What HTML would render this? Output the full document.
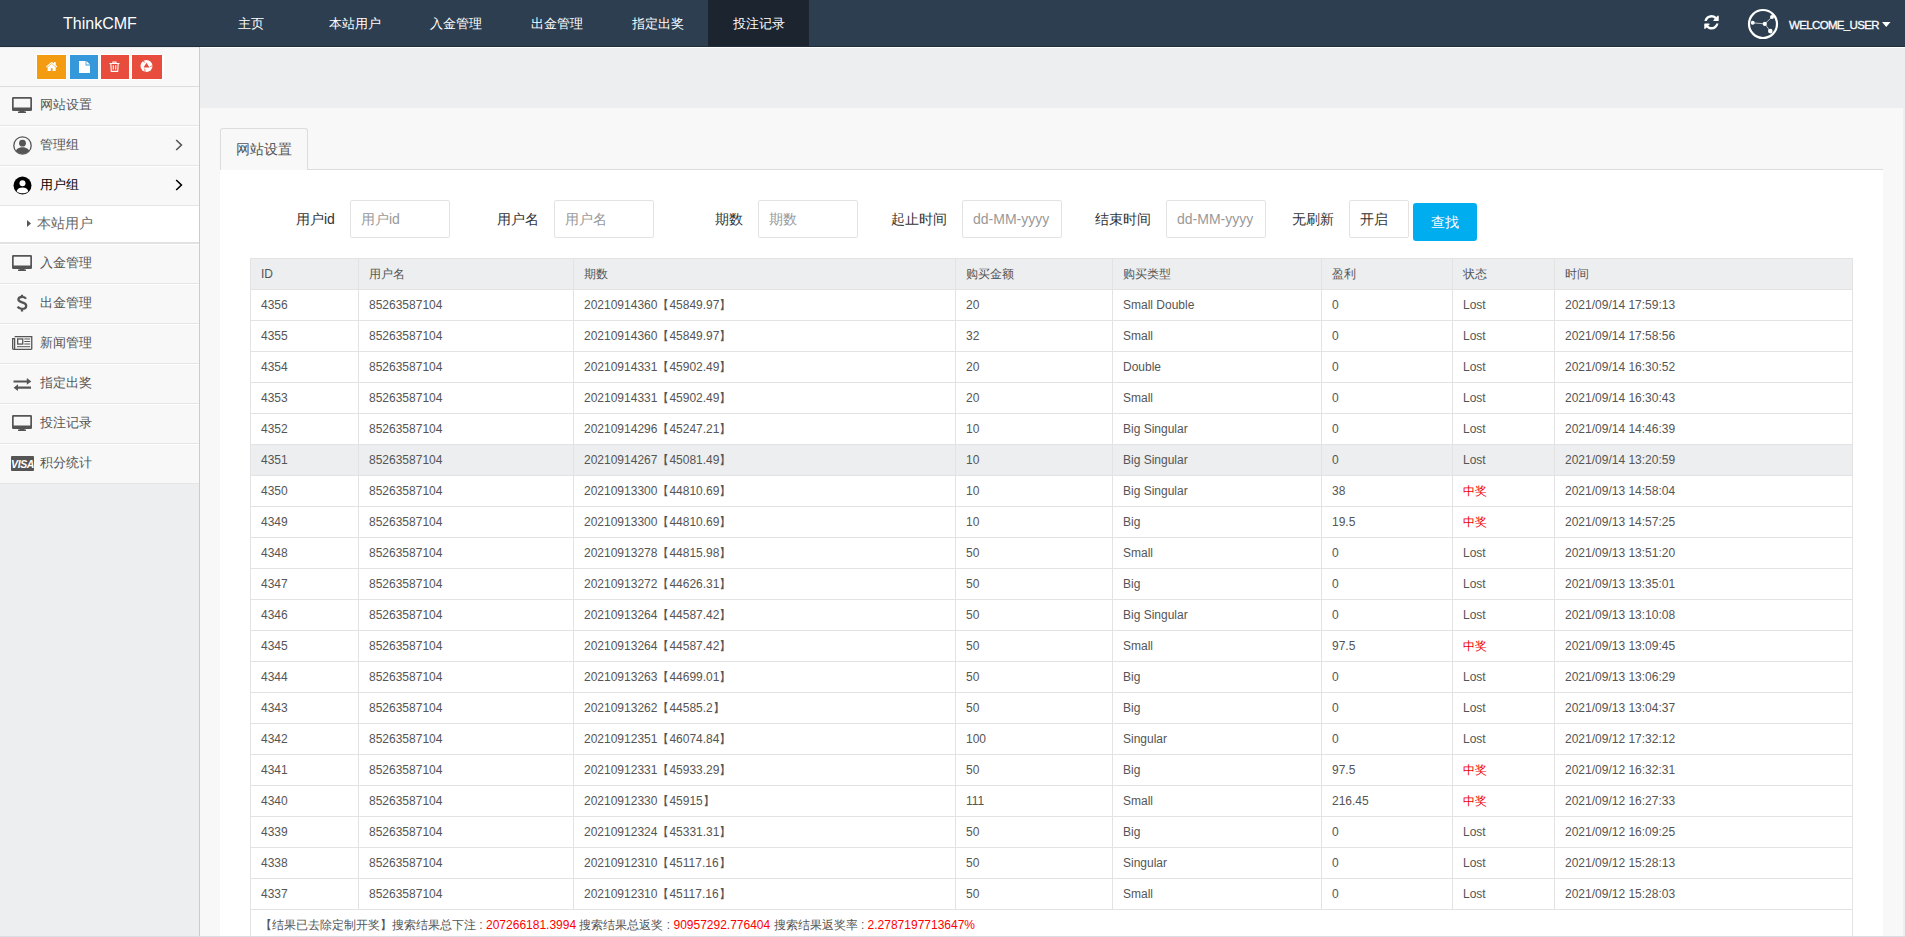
<!DOCTYPE html>
<html><head><meta charset="utf-8">
<style>
*{box-sizing:border-box;}
html,body{margin:0;padding:0;width:1905px;height:937px;overflow:hidden;background:#eceef0;font-family:"Liberation Sans",sans-serif;position:relative;}
.a{position:absolute;}
#top{position:absolute;left:0;top:0;width:1905px;height:47px;background:#2c3e50;border-bottom:1px solid #1f2d3d;}
#logo{position:absolute;left:63px;top:15px;color:#fff;font-size:16px;line-height:18px;}
.nav{position:absolute;top:0;height:46px;line-height:47.5px;color:#fff;font-size:13.4px;text-align:center;width:101px;}
.nav.act{background:#1b242f;}
#wel{position:absolute;left:1789px;top:18px;color:#fff;font-size:11.5px;line-height:14px;letter-spacing:-0.65px;-webkit-text-stroke:0.3px #fff;}
#side{position:absolute;left:0;top:47px;width:200px;height:890px;background:#eceef0;border-right:1px solid #ccc;}
.tb{position:absolute;top:55px;height:25px;border:1px solid #fff;}
.tb svg{position:absolute;left:0;top:0;}
.mi{position:absolute;left:0;width:199px;height:40px;background:#f8f8f8;border-top:1px solid #fff;border-bottom:1px solid #e5e5e5;color:#555;font-size:13px;}
.mi .t{position:absolute;left:40px;top:9px;line-height:18px;}
.mi svg{position:absolute;}
.chev{position:absolute;left:175px;top:13px;}
#main{position:absolute;left:200px;top:47px;width:1705px;height:890px;background:#eceef0;}
#content{position:absolute;left:200px;top:108px;width:1703px;height:829px;background:#f8f8f8;}
#tab{position:absolute;left:220px;top:128px;width:88px;height:42px;border:1px solid #ddd;border-bottom:none;border-radius:3px 3px 0 0;background:#f8f8f8;color:#555;font-size:14px;line-height:18px;padding:11px 0 0 15px;}
#tabline{position:absolute;left:307px;top:169px;width:1576px;height:1px;background:#ddd;}
#panel{position:absolute;left:220px;top:170px;width:1663px;height:767px;background:#fff;}
.lbl{position:absolute;top:210px;font-size:14px;line-height:18px;color:#333;}
.inp{position:absolute;top:200px;height:38px;width:100px;border:1px solid #e3e3e3;border-radius:2px;background:#fff;color:#999;font-size:14px;line-height:18px;padding:9px 0 0 10px;}
#btn{position:absolute;left:1413px;top:203px;width:64px;height:38px;background:#00aeef;border-radius:3px;color:#fff;font-size:14px;line-height:18px;text-align:center;padding-top:10px;}
table{position:absolute;left:250px;top:258px;border-collapse:collapse;table-layout:fixed;width:1602px;font-size:12px;color:#555;}
td,th{border:1px solid #e3e3e3;height:31px;padding:0 10px;text-align:left;font-weight:normal;white-space:nowrap;overflow:hidden;}
th{background:#eceef0;}
tr.hl td{background:#eceef0;}
td.win{color:#e00;}
.red{color:#f00;}
</style></head><body>
<div id="top">
  <div id="logo">ThinkCMF</div>
  <div class="nav" style="left:200px">主页</div>
  <div class="nav" style="left:304px">本站用户</div>
  <div class="nav" style="left:405px">入金管理</div>
  <div class="nav" style="left:506px">出金管理</div>
  <div class="nav" style="left:607px">指定出奖</div>
  <div class="nav act" style="left:708px">投注记录</div>
  <svg class="a" style="left:1704px;top:15px" width="15" height="14.5" viewBox="0 128 1536 1536"><path fill="#fff" d="M1511 1056q0 5-1 7-64 268-268 434.5t-478 166.5q-146 0-282.5-55t-243.5-157l-129 129q-19 19-45 19t-45-19-19-45v-448q0-26 19-45t45-19h448q26 0 45 19t19 45-19 45l-137 137q71 66 161 102t187 36q134 0 250-65t186-179q11-17 53-117 8-23 30-23h192q13 0 22.5 9.5t9.5 22.5zm25-800v448q0 26-19 45t-45 19h-448q-26 0-45-19t-19-45 19-45l138-138q-148-137-349-137-134 0-250 65t-186 179q-11 17-53 117-8 23-30 23h-199q-13 0-22.5-9.5t-9.5-22.5v-7q65-268 270-434.5t480-166.5q146 0 284 55.5t245 156.5l130-129q19-19 45-19t45 19 19 45z"/></svg>
  <svg class="a" style="left:1747px;top:8px" width="32" height="32" viewBox="0 0 32 32"><circle cx="16" cy="16" r="14" fill="none" stroke="#fff" stroke-width="2.2"/><path d="M5.7 14.8L17.8 15.9L25 9M17.8 15.9L23.3 23.1" stroke="#c8ccd0" stroke-width="0.9" fill="none"/><circle cx="5.7" cy="14.8" r="2" fill="#fff"/><circle cx="17.8" cy="15.9" r="2.1" fill="#fff"/><circle cx="25" cy="9" r="2" fill="#fff"/><circle cx="23.3" cy="23.1" r="2.3" fill="#fff"/></svg>
  <div id="wel">WELCOME_USER</div>
  <svg class="a" style="left:1882px;top:22px" width="8.5" height="5" viewBox="0 0 8.5 5"><path d="M0 0H8.5L4.25 5Z" fill="#fff"/></svg>
</div>
<div class="a" style="left:0;top:47px;width:1905px;height:1px;background:#fff"></div>
<div id="side"></div>
<div class="a" style="left:0;top:48px;width:199px;height:38px;background:#f8f8f8;"></div>
<div class="a" style="left:0;top:86px;width:199px;height:1px;background:#ddd;"></div>
<div class="a" style="left:36px;top:54px;width:128px;height:26px;background:#fff"></div>
<div class="a" style="left:67px;top:54px;width:2px;height:26px;background:#f8f8f8"></div>
<div class="a" style="left:99px;top:54px;width:1px;height:26px;background:#f8f8f8"></div>
<div class="a" style="left:130px;top:54px;width:1px;height:26px;background:#f8f8f8"></div>
<div class="a" style="left:37px;top:55px;width:29px;height:24px;background:#f39c12"></div>
<div class="a" style="left:70px;top:55px;width:28px;height:24px;background:#3498db"></div>
<div class="a" style="left:101px;top:55px;width:28px;height:24px;background:#e74c3c"></div>
<div class="a" style="left:132px;top:55px;width:30px;height:24px;background:#e74c3c"></div>
<svg class="a" style="left:46px;top:62px" width="11.3" height="9" viewBox="26 253 1612 1283"><path fill="#fff" d="M1408 992v480q0 26-19 45t-45 19h-384v-384h-256v384h-384q-26 0-45-19t-19-45v-480q0-1 .5-3t.5-3l575-474 575 474q1 2 1 6zm223-69l-62 74q-8 9-21 11h-3q-13 0-21-7l-692-577-692 577q-12 8-24 7-13-2-21-11l-62-74q-8-10-7-23.5t11-21.5l719-599q32-26 76-26t76 26l244 204v-195q0-14 9-23t23-9h192q14 0 23 9t9 23v408l219 182q10 8 11 21.5t-7 23.5z"/></svg>
<svg class="a" style="left:79px;top:61px" width="11" height="12" viewBox="0 0 11 12"><path fill="#fff" d="M0 0H6.6V4.4H11V12H0Z M7.4 0L11 3.6H7.4Z"/></svg>
<svg class="a" style="left:109px;top:61px" width="11" height="11" viewBox="0 0 11 11"><path fill="none" stroke="#fff" stroke-width="1.1" d="M0.5 2.5H10.5 M4 2.5V1H7V2.5 M1.8 2.5L2.3 10.4H8.7L9.2 2.5 M4.3 4.3V8.6 M6.7 4.3V8.6"/></svg>
<svg class="a" style="left:140px;top:60px" width="13" height="12" viewBox="0 0 13 12"><circle cx="6.5" cy="6" r="6" fill="#fff"/><path fill="#e74c3c" d="M6.5 2.8L9.5 7.6H3.5Z"/><path stroke="#e74c3c" stroke-width="0.7" d="M5.2 2.4L2.6 1.2 M10.2 6.6L12.8 5.6 M4.6 8.6L5.2 12.2"/></svg>

<div class="mi" style="top:86px;border-top-color:#ddd"><span class="t">网站设置</span></div>
<div class="mi" style="top:126px"><span class="t">管理组</span></div>
<div class="mi" style="top:166px;color:#000"><span class="t">用户组</span></div>
<div class="mi" style="top:206px;height:38px;background:#fff;border-bottom:2px solid #e2e2e2;color:#666"><span class="t" style="left:37px;top:7px;font-size:14px">本站用户</span></div>
<div class="mi" style="top:244px"><span class="t">入金管理</span></div>
<div class="mi" style="top:284px"><span class="t">出金管理</span></div>
<div class="mi" style="top:324px"><span class="t">新闻管理</span></div>
<div class="mi" style="top:364px"><span class="t">指定出奖</span></div>
<div class="mi" style="top:404px"><span class="t">投注记录</span></div>
<div class="mi" style="top:444px"><span class="t">积分统计</span></div>
<svg class="a" style="left:12px;top:97px" width="20" height="16" viewBox="0 0 20 16"><path fill="#555" fill-rule="evenodd" d="M1.3 0h17.4A1.3 1.3 0 0 1 20 1.3v11.4a1.3 1.3 0 0 1-1.3 1.3H1.3A1.3 1.3 0 0 1 0 12.7V1.3A1.3 1.3 0 0 1 1.3 0z M1.7 1.8v8.6h16.6V1.8z"/><path fill="#555" d="M7.5 13.5h5v1h1.5v1.5H6v-1.5h1.5z"/></svg>
<svg class="a" style="left:13px;top:136px" width="19" height="19" viewBox="0 0 19 19"><defs><clipPath id="cc"><circle cx="9.5" cy="9.5" r="8.5"/></clipPath></defs><circle cx="9.5" cy="9.5" r="8.7" fill="none" stroke="#555" stroke-width="1.3"/><circle cx="9.5" cy="7.2" r="3.4" fill="#555"/><path clip-path="url(#cc)" fill="#555" d="M2 19C2 13.5 5 11.2 9.5 11.2S17 13.5 17 19Z"/></svg>
<svg class="a" style="left:13px;top:176px" width="19" height="19" viewBox="0 0 19 19"><circle cx="9.5" cy="9.5" r="9" fill="#000"/><circle cx="9.5" cy="7.2" r="3" fill="#fff"/><path fill="#fff" d="M3.6 15.2C4.5 12.6 6.8 11.6 9.5 11.6S14.5 12.6 15.4 15.2C14 16.6 12 17.3 9.5 17.3S5 16.6 3.6 15.2Z"/></svg>
<svg class="a" style="left:175px;top:139px" width="8" height="12" viewBox="0 0 8 12"><path d="M1.2 1L6.4 6L1.2 11" fill="none" stroke="#555" stroke-width="1.6"/></svg>
<svg class="a" style="left:175px;top:179px" width="8" height="12" viewBox="0 0 8 12"><path d="M1.2 1L6.4 6L1.2 11" fill="none" stroke="#000" stroke-width="1.6"/></svg>
<svg class="a" style="left:27px;top:220px" width="4" height="7" viewBox="0 0 4 7"><path d="M0 0L4 3.5L0 7Z" fill="#555"/></svg>
<svg class="a" style="left:12px;top:255px" width="20" height="16" viewBox="0 0 20 16"><path fill="#555" fill-rule="evenodd" d="M1.3 0h17.4A1.3 1.3 0 0 1 20 1.3v11.4a1.3 1.3 0 0 1-1.3 1.3H1.3A1.3 1.3 0 0 1 0 12.7V1.3A1.3 1.3 0 0 1 1.3 0z M1.7 1.8v8.6h16.6V1.8z"/><path fill="#555" d="M7.5 13.5h5v1h1.5v1.5H6v-1.5h1.5z"/></svg>
<svg class="a" style="left:16px;top:294px" width="12" height="19" viewBox="0 0 12 19"><path fill="none" stroke="#555" stroke-width="2.3" d="M10 4.8C9.3 3.5 8 2.9 6.2 2.9 3.9 2.9 2.4 4 2.4 5.6 2.4 9.2 10.2 7.6 10.2 11.7 10.2 13.6 8.4 14.9 6 14.9 4 14.9 2.5 14 1.6 12.6 M6 0.8V2.9 M6 14.9V17.4"/></svg>
<svg class="a" style="left:12px;top:336px" width="21" height="14" viewBox="0 0 21 14"><path fill="none" stroke="#555" stroke-width="1.3" d="M2.6 0.65H19.75V12.65A0.7 0.7 0 0 1 19.05 13.35H1.4A0.75 0.75 0 0 1 0.65 12.6V2.6H2.6V13"/><rect x="5.65" y="2.95" width="5.1" height="5.1" fill="none" stroke="#555" stroke-width="1.3"/><path stroke="#555" stroke-width="1" d="M12.3 3H18.2 M12.3 5.5H18.2 M12.3 8H18.2 M5 10.7H18.2"/></svg>
<svg class="a" style="left:13px;top:377px" width="19" height="15" viewBox="0 0 19 15"><path fill="#555" d="M0.5 3.4H13.8V1L18.3 4.4L13.8 7.8V5.6H0.5Z M18 9.6H5V7.3L0.6 10.7L5 14V11.8H18Z"/></svg>
<svg class="a" style="left:12px;top:415px" width="20" height="16" viewBox="0 0 20 16"><path fill="#555" fill-rule="evenodd" d="M1.3 0h17.4A1.3 1.3 0 0 1 20 1.3v11.4a1.3 1.3 0 0 1-1.3 1.3H1.3A1.3 1.3 0 0 1 0 12.7V1.3A1.3 1.3 0 0 1 1.3 0z M1.7 1.8v8.6h16.6V1.8z"/><path fill="#555" d="M7.5 13.5h5v1h1.5v1.5H6v-1.5h1.5z"/></svg>
<svg class="a" style="left:11px;top:456px" width="23" height="15" viewBox="0 0 23 15"><rect x="0" y="0" width="23" height="15" rx="1" fill="#555"/><text x="11.5" y="11.6" text-anchor="middle" font-family="Liberation Sans" font-weight="bold" font-style="italic" font-size="10.5" fill="#fff" letter-spacing="-0.4">VISA</text></svg>

<div id="content"></div>
<div class="a" style="left:1903px;top:108px;width:2px;height:829px;background:#eceef0"></div>
<div id="tab">网站设置</div>
<div id="tabline"></div>
<div id="panel"></div>

<div class="lbl" style="left:296px">用户id</div>
<div class="inp" style="left:350px">用户id</div>
<div class="lbl" style="left:497px">用户名</div>
<div class="inp" style="left:554px">用户名</div>
<div class="lbl" style="left:715px">期数</div>
<div class="inp" style="left:758px">期数</div>
<div class="lbl" style="left:891px">起止时间</div>
<div class="inp" style="left:962px">dd-MM-yyyy</div>
<div class="lbl" style="left:1095px">结束时间</div>
<div class="inp" style="left:1166px">dd-MM-yyyy</div>
<div class="lbl" style="left:1292px">无刷新</div>
<div class="inp" style="left:1349px;width:60px;color:#333">开启</div>
<div id="btn">查找</div>

<table>
<colgroup><col style="width:108px"><col style="width:215px"><col style="width:382px"><col style="width:157px"><col style="width:209px"><col style="width:131px"><col style="width:102px"><col style="width:298px"></colgroup>
<tr><th>ID</th><th>用户名</th><th>期数</th><th>购买金额</th><th>购买类型</th><th>盈利</th><th>状态</th><th>时间</th></tr>
<tr><td>4356</td><td>85263587104</td><td>20210914360【45849.97】</td><td>20</td><td>Small Double</td><td>0</td><td>Lost</td><td>2021/09/14 17:59:13</td></tr>
<tr><td>4355</td><td>85263587104</td><td>20210914360【45849.97】</td><td>32</td><td>Small</td><td>0</td><td>Lost</td><td>2021/09/14 17:58:56</td></tr>
<tr><td>4354</td><td>85263587104</td><td>20210914331【45902.49】</td><td>20</td><td>Double</td><td>0</td><td>Lost</td><td>2021/09/14 16:30:52</td></tr>
<tr><td>4353</td><td>85263587104</td><td>20210914331【45902.49】</td><td>20</td><td>Small</td><td>0</td><td>Lost</td><td>2021/09/14 16:30:43</td></tr>
<tr><td>4352</td><td>85263587104</td><td>20210914296【45247.21】</td><td>10</td><td>Big Singular</td><td>0</td><td>Lost</td><td>2021/09/14 14:46:39</td></tr>
<tr class="hl"><td>4351</td><td>85263587104</td><td>20210914267【45081.49】</td><td>10</td><td>Big Singular</td><td>0</td><td>Lost</td><td>2021/09/14 13:20:59</td></tr>
<tr><td>4350</td><td>85263587104</td><td>20210913300【44810.69】</td><td>10</td><td>Big Singular</td><td>38</td><td class="win">中奖</td><td>2021/09/13 14:58:04</td></tr>
<tr><td>4349</td><td>85263587104</td><td>20210913300【44810.69】</td><td>10</td><td>Big</td><td>19.5</td><td class="win">中奖</td><td>2021/09/13 14:57:25</td></tr>
<tr><td>4348</td><td>85263587104</td><td>20210913278【44815.98】</td><td>50</td><td>Small</td><td>0</td><td>Lost</td><td>2021/09/13 13:51:20</td></tr>
<tr><td>4347</td><td>85263587104</td><td>20210913272【44626.31】</td><td>50</td><td>Big</td><td>0</td><td>Lost</td><td>2021/09/13 13:35:01</td></tr>
<tr><td>4346</td><td>85263587104</td><td>20210913264【44587.42】</td><td>50</td><td>Big Singular</td><td>0</td><td>Lost</td><td>2021/09/13 13:10:08</td></tr>
<tr><td>4345</td><td>85263587104</td><td>20210913264【44587.42】</td><td>50</td><td>Small</td><td>97.5</td><td class="win">中奖</td><td>2021/09/13 13:09:45</td></tr>
<tr><td>4344</td><td>85263587104</td><td>20210913263【44699.01】</td><td>50</td><td>Big</td><td>0</td><td>Lost</td><td>2021/09/13 13:06:29</td></tr>
<tr><td>4343</td><td>85263587104</td><td>20210913262【44585.2】</td><td>50</td><td>Big</td><td>0</td><td>Lost</td><td>2021/09/13 13:04:37</td></tr>
<tr><td>4342</td><td>85263587104</td><td>20210912351【46074.84】</td><td>100</td><td>Singular</td><td>0</td><td>Lost</td><td>2021/09/12 17:32:12</td></tr>
<tr><td>4341</td><td>85263587104</td><td>20210912331【45933.29】</td><td>50</td><td>Big</td><td>97.5</td><td class="win">中奖</td><td>2021/09/12 16:32:31</td></tr>
<tr><td>4340</td><td>85263587104</td><td>20210912330【45915】</td><td>111</td><td>Small</td><td>216.45</td><td class="win">中奖</td><td>2021/09/12 16:27:33</td></tr>
<tr><td>4339</td><td>85263587104</td><td>20210912324【45331.31】</td><td>50</td><td>Big</td><td>0</td><td>Lost</td><td>2021/09/12 16:09:25</td></tr>
<tr><td>4338</td><td>85263587104</td><td>20210912310【45117.16】</td><td>50</td><td>Singular</td><td>0</td><td>Lost</td><td>2021/09/12 15:28:13</td></tr>
<tr><td>4337</td><td>85263587104</td><td>20210912310【45117.16】</td><td>50</td><td>Small</td><td>0</td><td>Lost</td><td>2021/09/12 15:28:03</td></tr>
<tr><td colspan="8" style="padding-left:9px">【结果已去除定制开奖】搜索结果总下注 : <span class="red">207266181.3994</span> 搜索结果总返奖 : <span class="red">90957292.776404</span> 搜索结果返奖率 : <span class="red">2.2787197713647%</span></td></tr>
</table>
<div class="a" style="left:0;top:936px;width:1905px;height:1px;background:#dcdde2"></div>
</body></html>
